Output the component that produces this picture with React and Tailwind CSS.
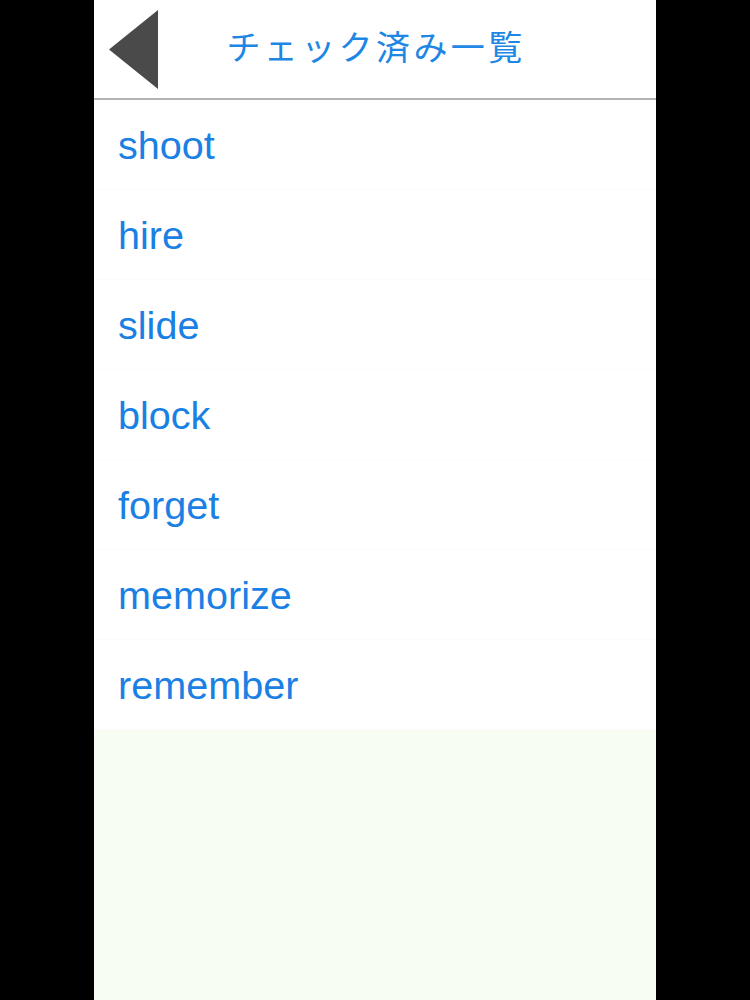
import React from "react";

const words = ["shoot", "hire", "slide", "block", "forget", "memorize", "remember"];

export default function App() {
  return (
    <div className="flex justify-center bg-black min-h-[1000px]">
      <div className="flex flex-col w-[562px] h-[1000px] bg-[#f7fdf2]">
        {/* header */}
        <div className="relative flex items-center justify-center h-[100px] bg-white border-b-2 border-[#b3b3b3]">
          <svg className="absolute left-[15px] top-[10px]" width="50" height="80" viewBox="0 0 50 80">
            <polygon points="49,0 49,79 0,39.5" fill="#4a4a4a" />
          </svg>
          <h1
            className="text-[34px] tracking-[3.4px] text-[#1e86e3] leading-none pb-[6px] pl-[2px]"
            style={{ fontFamily: '"Noto Sans CJK JP", "Noto Sans", sans-serif' }}
          >
            チェック済み一覧
          </h1>
        </div>

        {/* checked words */}
        <ul className="bg-white">
          {words.map((word) => (
            <li
              key={word}
              className="flex items-center h-[90px] px-[24px] pt-[3px] border-b border-[#fbfbfb]"
            >
              <span
                className="text-[39.6px] text-[#1a80e4]"
                style={{ fontFamily: '"Liberation Sans", Arial, sans-serif' }}
              >
                {word}
              </span>
            </li>
          ))}
        </ul>
      </div>
    </div>
  );
}
